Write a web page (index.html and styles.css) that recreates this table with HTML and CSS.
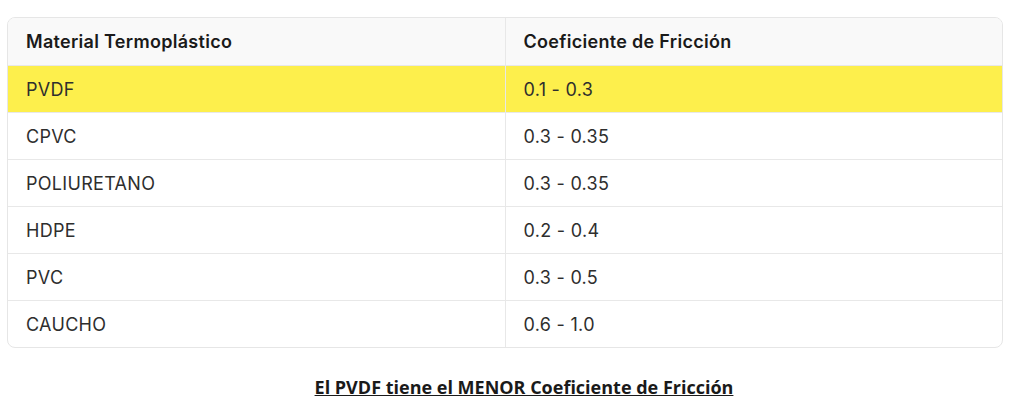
FILE: index.html
```html
<!DOCTYPE html>
<html lang="es">
<head>
<meta charset="utf-8">
<link rel="stylesheet" href="styles.css">
</head>
<body>
<div class="page">
  <div class="table-wrap">
    <table class="friction">
      <thead>
        <tr><th>Material Termoplástico</th><th>Coeficiente de Fricción</th></tr>
      </thead>
      <tbody>
        <tr class="hl"><td>PVDF</td><td>0.1 - 0.3</td></tr>
        <tr><td>CPVC</td><td>0.3 - 0.35</td></tr>
        <tr><td>POLIURETANO</td><td>0.3 - 0.35</td></tr>
        <tr><td>HDPE</td><td>0.2 - 0.4</td></tr>
        <tr><td>PVC</td><td>0.3 - 0.5</td></tr>
        <tr><td>CAUCHO</td><td>0.6 - 1.0</td></tr>
      </tbody>
    </table>
  </div>
  <p class="caption">El PVDF tiene el MENOR Coeficiente de Fricción</p>
</div>
</body>
</html>
```
FILE: styles.css
```css
html, body {
  margin: 0;
  padding: 0;
  background: #ffffff;
}
.page {
  padding: 17px 22px 0 7px;
  font-family: Inter, "Noto Sans", sans-serif;
  color: #262626;
}
.table-wrap {
  border: 1px solid #e6e6e6;
  border-radius: 8px;
  overflow: hidden;
  width: 994px;
}
.friction {
  width: 100%;
  border-collapse: collapse;
  table-layout: fixed;
  font-size: 18px;
  letter-spacing: 0.3px;
}
.friction th, .friction td {
  text-align: left;
  padding: 0 18px;
  height: 46px;
  border-bottom: 1px solid #e8e8e8;
}
.friction th:first-child, .friction td:first-child {
  border-right: 1px solid #e8e8e8;
}
.friction tbody tr:last-child td {
  border-bottom: none;
}
.friction th {
  background: #f9f9f9;
  font-weight: 600;
  color: #1a1a1a;
  height: 47px;
}
.friction td {
  font-weight: 400;
  color: #2e2e2e;
}
.friction tr.hl td {
  background: #fdef4c;
}
.caption {
  margin: 27px 0 0 0;
  text-align: center;
  font-family: "Open Sans", sans-serif;
  font-weight: 700;
  font-size: 18px;
  text-decoration: underline;
  color: #1a1a1a;
  padding-left: 39px;
}
```
